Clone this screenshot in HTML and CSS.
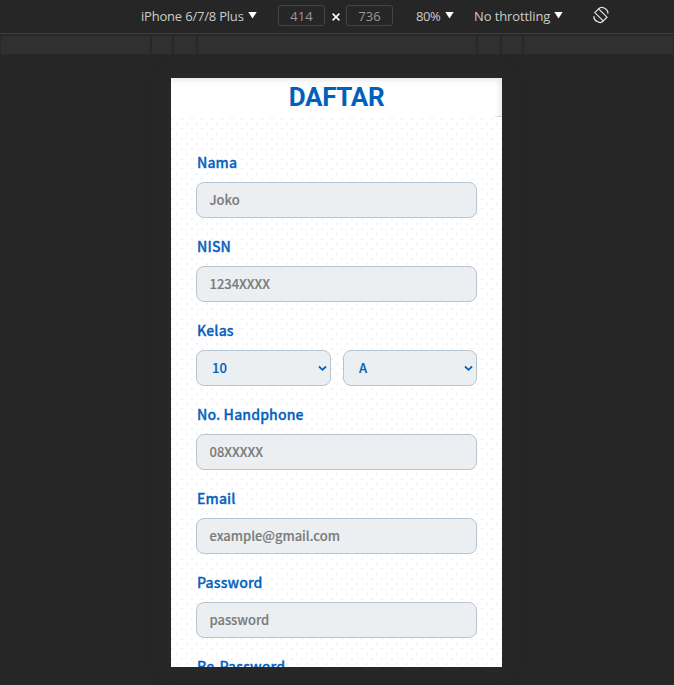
FILE: index.html
```
<!DOCTYPE html>
<html lang="id">
<head>
<meta charset="utf-8">
<title>Daftar</title>
<link rel="stylesheet" href="styles.css">
</head>
<body>
<header class="toolbar">
  <span class="device">iPhone 6/7/8 Plus</span><i class="tri"></i>
  <span class="size first">414</span><svg class="times" width="8" height="8" viewBox="0 0 8 8"><path d="M.6.6l6.8 6.8M7.4.6L.6 7.4"/></svg><span class="size">736</span>
  <span class="zoom">80%</span><i class="tri"></i>
  <span class="throttle">No throttling</span><i class="tri"></i>
  <svg class="rotate" width="16" height="18" viewBox="0 0 16 18"><path d="M1.8 6.6L5.6 2.8 14 11.2 10.2 15z"/><path d="M5.6 2.8C7 1.2 9.5 1 11.6 2.2 13.8 3.4 15.2 5.6 14.8 7.6M10.2 15C8.8 16.6 6.3 16.8 4.2 15.6 2 14.4.6 12.2 1 10.2"/></svg>
</header>
<div class="ruler"><i></i><i></i><i></i><i></i><i></i><i></i><i></i></div>
<main class="screen">
  <div class="title"><h1>DAFTAR</h1></div>
  <form class="form">
    <label>Nama</label><div class="field">Joko</div>
    <label>NISN</label><div class="field">1234XXXX</div>
    <label>Kelas</label>
    <div class="row">
      <div class="field select">10<svg width="9" height="7" viewBox="0 0 9 7"><path d="M1 1.5l3.5 3.3L8 1.5"/></svg></div>
      <div class="field select">A<svg width="9" height="7" viewBox="0 0 9 7"><path d="M1 1.5l3.5 3.3L8 1.5"/></svg></div>
    </div>
    <label>No. Handphone</label><div class="field">08XXXXX</div>
    <label>Email</label><div class="field">example@gmail.com</div>
    <label>Password</label><div class="field">password</div>
    <label>Re-Password</label>
  </form>
</main>
</body>
</html>
```
FILE: styles.css
```
* { box-sizing: border-box; }
body { margin: 0; height: 685px; overflow: hidden; background: #262626; }
.toolbar {
  height: 34px; padding: 0 0 2px 141px; display: flex; align-items: center;
  border-bottom: 1px solid #404040; color: #ccc; white-space: nowrap;
  font: 13px "Open Sans", "Noto Sans", sans-serif;
}
.device { width: 104px; letter-spacing: -.2px; }
.zoom { width: 26px; margin-left: 23px; letter-spacing: -.4px; }
.throttle { width: 77px; margin-left: 19px; letter-spacing: -.1px; }
.tri { width: 9px; height: 7px; margin: 0 0 1px 3px; background: #fff; clip-path: polygon(0 0, 100% 0, 50% 100%); }
.size {
  width: 47px; height: 21px; border: 1px solid #444; border-radius: 3px;
  text-align: center; line-height: 20px; color: #999;
}
.first { margin-left: 21px; }
.times { margin: 3px 6px 0 7px; stroke: #fff; stroke-width: 1.5; fill: none; }
.size + .zoom { margin-left: 23px; }
.tri + .throttle { margin-left: 20px; }
.rotate { margin: 0 0 1px 30px; fill: none; stroke: #e2e2e2; stroke-width: 1.2; }
.ruler {
  display: grid; grid-template-columns: 149px 20px 22px 278px 22px 20px 149px;
  gap: 2px; height: 20px; margin-top: 1px; padding: 1px 0 1px 1px; background: #282828;
}
.ruler i { background: #303030; }
.screen {
  width: 331px; height: 589px; margin: 23px 0 0 171px; overflow: hidden;
  background-color: #fff;
  background-image: radial-gradient(circle at center, #f3f3f3 1px, transparent 1.3px), radial-gradient(circle at center, #f3f3f3 1px, transparent 1.3px);
  background-size: 10px 10px; background-position: -4px -4px, 1px 1px;
  box-shadow: 0 0 18px #2b2b2b;
}
.title {
  height: 39px; text-align: center;
  background: linear-gradient(to left, #aaa, transparent 8px) bottom / 100% 1px no-repeat #fff;
  box-shadow: inset 0 7px 7px -6px #ddd, inset -7px 0 7px -6px #e2e2e2;
}
.title h1 {
  margin: 0; color: #0061bd; letter-spacing: -.3px;
  font: 700 26px/38px Roboto, sans-serif;
}
.form { padding: 32px 25px 0 25px; color: #0061bd; font-family: "Noto Sans CJK SC", sans-serif; font-weight: 500; }
label {
  display: block; height: 24px; margin: 0 0 9px 1px; color: #0561c0;
  font-size: 14px; line-height: 26px; letter-spacing: .14px;
  -webkit-text-stroke: .3px #0561c0;
}
.field {
  height: 36px; margin-bottom: 15px; padding-left: 12.5px; border: 1px solid #b8c5d0;
  border-radius: 8px; background: #ebeff2; color: #7b7b7b;
  font-size: 13px; line-height: 34px; letter-spacing: -.03px;
  -webkit-text-stroke: .15px currentColor;
}
.row { display: grid; grid-template-columns: 135px 134px; gap: 12px; }
.select { display: flex; align-items: center; justify-content: space-between; padding: 0 3px 0 15px; color: #0061bd; }
.select svg { fill: none; stroke: #0061bd; stroke-width: 1.8; }
```
